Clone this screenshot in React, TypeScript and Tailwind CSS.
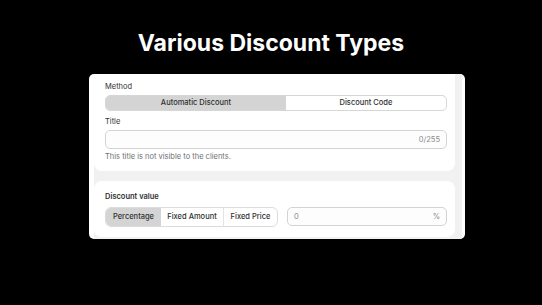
export default function App() {
  const font = { fontFamily: 'Inter, "Noto Sans", sans-serif' };

  return (
    <div className="w-[542px] h-[305px] bg-black overflow-hidden" style={font}>
      <h1 className="pt-[30px] h-[74px] text-center text-white text-[23px] leading-[26px] font-bold">
        Various Discount Types
      </h1>

      <div className="ml-[89px] w-[376px] h-[165px] bg-white rounded-[5px] overflow-hidden flex pl-[5px] pr-[3px]">
        <div className="flex-1 bg-[#f1f1f1] pr-[7px] flex flex-col">
          {/* method + title card */}
          <div className="bg-white rounded-b-[8px] pl-[11px] pr-[8px] pt-[8px] pb-[9px] text-[#303030]">
            <div className="text-[7.5px] leading-[10px]">Method</div>
            <div className="mt-[3px] h-[16px] flex border border-[#d6d6d6] rounded-[5px] overflow-hidden text-[7.5px] font-medium">
              <div className="w-[180px] bg-[#d4d4d4] flex items-center justify-center">Automatic Discount</div>
              <div className="flex-1 flex items-center justify-center">Discount Code</div>
            </div>
            <div className="mt-[6px] text-[7.5px] leading-[10px]">Title</div>
            <div className="mt-[3px] h-[19px] border border-[#d3d3d3] rounded-[5px] bg-[#fdfdfd] flex items-center justify-end pr-[6px] text-[7.5px] text-[#8a8a8a]">
              0/255
            </div>
            <div className="mt-[3px] text-[7.5px] leading-[10px] text-[#6f6f6f]">
              This title is not visible to the clients.
            </div>
          </div>

          {/* discount value card */}
          <div className="mt-[10px] bg-white rounded-[8px] pl-[11px] pr-[8px] pt-[11px] pb-[10px] text-[#303030]">
            <div className="text-[7.5px] leading-[10px] font-semibold">Discount value</div>
            <div className="mt-[5px] flex items-start gap-[9px]">
              <div className="h-[20px] flex border border-[#dcdcdc] rounded-[6px] overflow-hidden text-[7.5px] font-medium">
                <div className="w-[55px] bg-[#d4d4d4] flex items-center justify-center">Percentage</div>
                <div className="w-[63px] border-r border-[#e3e3e3] flex items-center justify-center">Fixed Amount</div>
                <div className="w-[53px] flex items-center justify-center">Fixed Price</div>
              </div>
              <div className="flex-1 h-[19px] border border-[#d3d3d3] rounded-[5px] bg-[#fdfdfd] flex items-center justify-between px-[6px] text-[7.5px] text-[#8a8a8a]">
                <span>0</span>
                <span>%</span>
              </div>
            </div>
          </div>
        </div>
      </div>
    </div>
  );
}
